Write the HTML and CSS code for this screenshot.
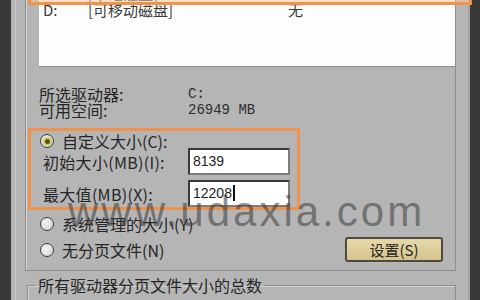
FILE: index.html
```html
<!DOCTYPE html>
<html lang="zh-CN">
<head>
    <meta charset="UTF-8">
    <title>虚拟内存</title>
    <link rel="stylesheet" href="styles.css">
</head>
<body>
<div class="window">
    <div class="group">
        <div class="listbox">
            <div class="row"><span>C:</span><span>[本地磁盘]</span><span></span></div>
            <div class="row"><span>D:</span><span>[可移动磁盘]</span><span>无</span></div>
        </div>
        <div class="info">
            <span>所选驱动器:</span><span class="mono">C:</span>
            <span>可用空间:</span><span class="mono">26949 MB</span>
        </div>
        <div class="custom">
            <div class="radio-row"><span class="radio checked"></span>自定义大小(C):</div>
            <div class="size-row first">
                <span class="size-label">初始大小(MB)(I):</span>
                <div class="input">8139</div>
            </div>
            <div class="size-row">
                <span class="size-label">最大值(MB)(X):</span>
                <div class="input">12208<span class="caret"></span></div>
            </div>
        </div>
        <div class="radio-row sys"><span class="radio"></span>系统管理的大小(Y)</div>
        <div class="last-row">
            <div class="radio-row"><span class="radio"></span>无分页文件(N)</div>
            <div class="button">设置(S)</div>
        </div>
    </div>
    <fieldset class="total">
        <legend>所有驱动器分页文件大小的总数</legend>
    </fieldset>
</div>
<div class="mark">www.udaxia.com</div>
<div class="highlight"></div>
</body>
</html>
```
FILE: styles.css
```css
* {
    margin: 0;
    padding: 0;
    box-sizing: border-box;
}

body {
    width: 480px;
    height: 300px;
    overflow: hidden;
    position: relative;
    background: #393939;
    font-family: "Noto Sans CJK SC", sans-serif;
    font-size: 16px;
    line-height: 16px;
    color: #262626;
}

.window {
    margin-left: 11px;
    width: 459px;
    height: 300px;
    overflow: hidden;
    background: #b5b5b5;
    box-shadow: inset 4px 0 0 #b5b5b5, inset 5px 0 0 #cbcbcb, inset -2px 0 0 #a6a6a6;
}

.group {
    margin: -24px 14px 0 14px;
    padding: 0 0 8px 13px;
    border: 1px solid #8f8f8f;
    box-shadow: inset 1px 1px 0 #d2d2d2;
}

.listbox {
    height: 90px;
    padding: 9px 0 0 4px;
    background: #fdfdfd;
    border-bottom: 1px solid #8c8c8c;
    font-size: 15px;
    color: #3a3a3a;
}

.listbox .row {
    display: grid;
    grid-template-columns: 45px 200px auto;
    height: 16px;
}

.info {
    display: grid;
    grid-template-columns: 149px auto;
    margin-top: 19px;
}

.mono {
    font-family: "Liberation Mono", monospace;
    font-size: 14px;
    color: #2e2e2e;
}

.custom {
    margin: 10px 0 0 -11px;
    width: 272px;
    padding: 2px 0 0 9px;
    border: 3px solid #f0924a;
}

.radio-row {
    display: flex;
    align-items: center;
    gap: 8px;
    height: 16px;
}

.radio {
    width: 14px;
    height: 14px;
    border-radius: 50%;
    border: 1px solid #3c3c3c;
    background: radial-gradient(circle at 40% 40%, #f4f4f4, #cfcfcf);
    display: flex;
    align-items: center;
    justify-content: center;
}

.radio.checked::after {
    content: "";
    width: 5px;
    height: 5px;
    border-radius: 50%;
    background: #4f5a14;
    box-shadow: 0 0 0 2px #d8cc5a;
}

.size-row {
    display: flex;
    align-items: center;
    height: 27px;
    margin-top: 5px;
    padding-left: 3px;
}

.size-row.first {
    margin-top: -1px;
}

.size-label {
    width: 145px;
    letter-spacing: 0.3px;
}

.input {
    width: 102px;
    height: 27px;
    padding-left: 3px;
    background: #fff;
    border: 2px solid;
    border-color: #3a3a3a #7c7c7c #7c7c7c #3a3a3a;
    font-family: "Liberation Sans", sans-serif;
    font-size: 14px;
    line-height: 23px;
    color: #222;
}

.caret {
    display: inline-block;
    width: 2px;
    height: 16px;
    margin-left: 1px;
    background: #111;
    vertical-align: -3px;
}

.sys {
    margin: 6px 0 0 1px;
}

.last-row {
    display: flex;
    align-items: center;
    justify-content: space-between;
    height: 25px;
    margin: 5px 12px 0 1px;
}

.button {
    width: 98px;
    height: 25px;
    border: 2px solid #4e4a3e;
    border-radius: 3px;
    background: linear-gradient(#e6d8a8, #d6c48e);
    text-align: center;
    font-size: 15px;
    line-height: 21px;
}

.total {
    margin: 6px 14px 0 16px;
    height: 40px;
    padding: 0 8px;
    border: 1px solid #8f8f8f;
    box-shadow: inset 1px 1px 0 #d2d2d2;
}

.total legend {
    padding: 0 2px;
    line-height: 16px;
}

.mark {
    position: absolute;
    left: 68px;
    top: 191px;
    font-family: "Liberation Sans", sans-serif;
    font-size: 42px;
    line-height: 42px;
    letter-spacing: 3px;
    color: rgba(55, 55, 55, 0.55);
    pointer-events: none;
}

.highlight {
    position: absolute;
    left: 28px;
    top: -10px;
    width: 444px;
    height: 15px;
    border: 3px solid #f0924a;
    background: rgba(248, 200, 150, 0.55);
}
```
